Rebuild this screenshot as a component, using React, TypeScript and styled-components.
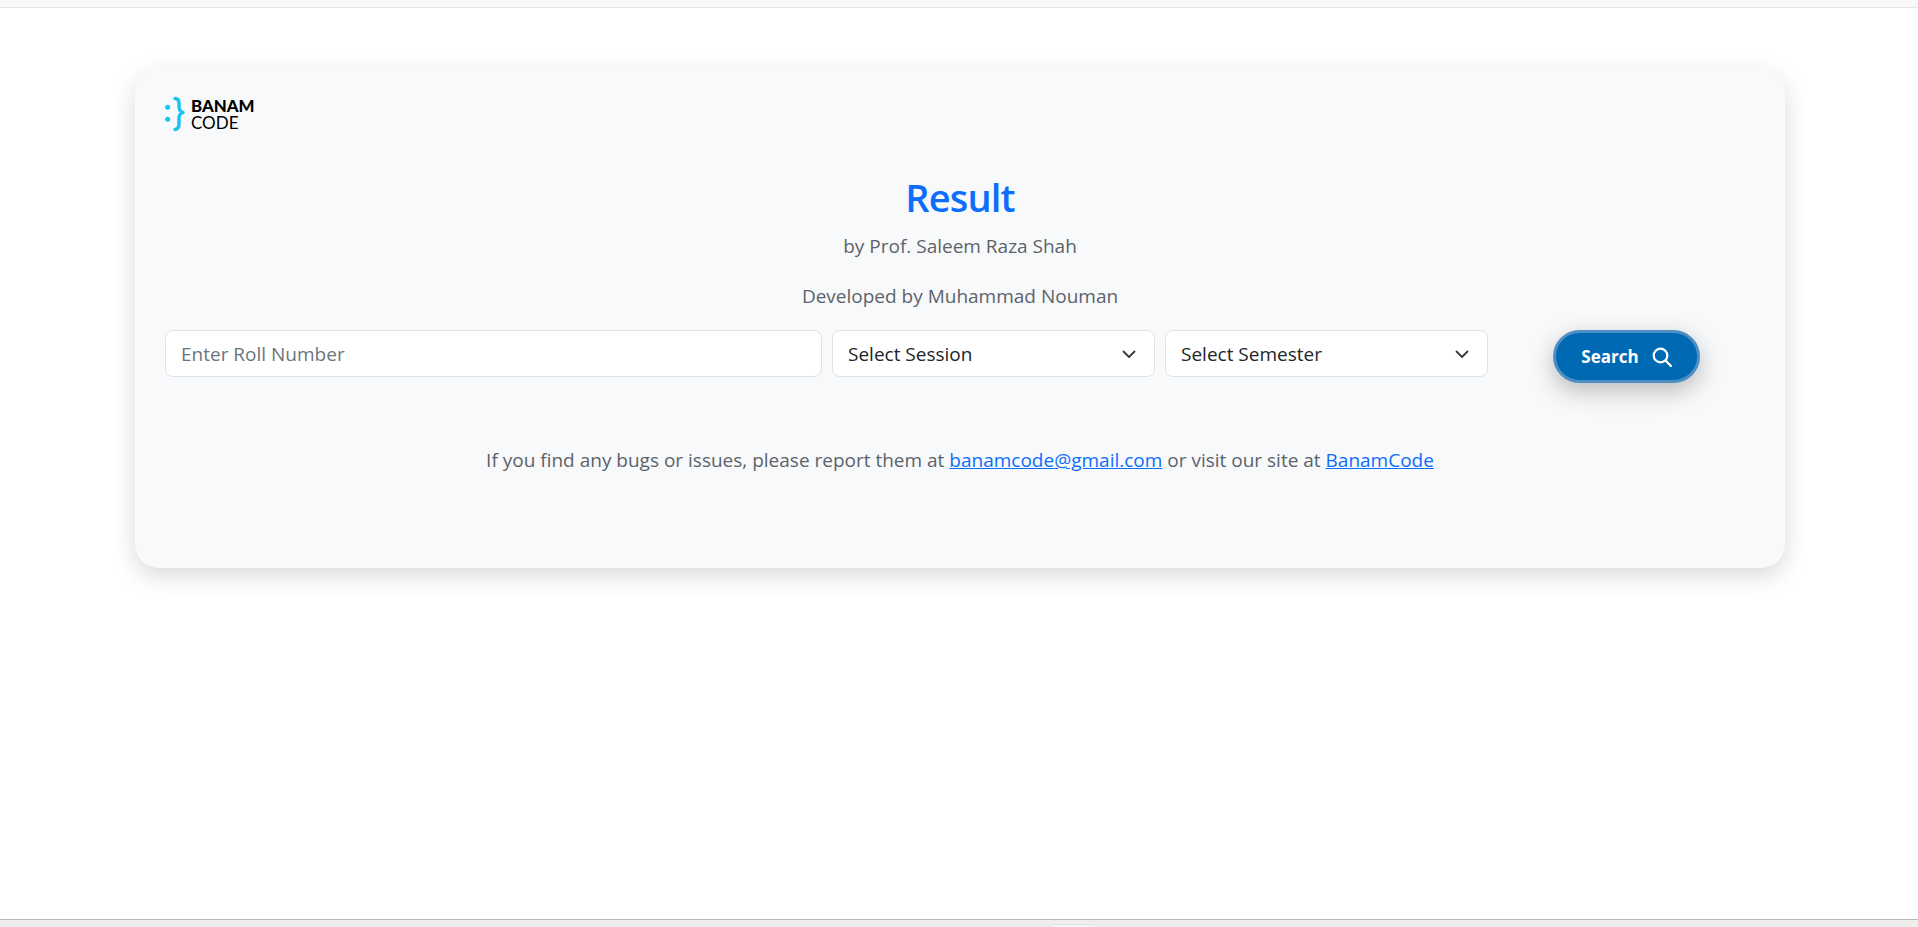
import styled, { createGlobalStyle } from 'styled-components'

const GlobalStyle = createGlobalStyle`
  * {
    box-sizing: border-box;
  }

  html, body {
    margin: 0;
    height: 100%;
    background: #fff;
    font-family: "Open Sans", "Noto Sans", sans-serif;
  }
`

const Chevron = () => (
  <svg width="16" height="16" viewBox="0 0 16 16" fill="none">
    <path d="M2.500 5.500L8 11l5.500-5.500" stroke="#343a40" strokeWidth="1.800" strokeLinecap="round" strokeLinejoin="round" />
  </svg>
)

const SearchIcon = () => (
  <svg width="20" height="20" viewBox="0 0 20 20" fill="none" stroke="#fff" strokeWidth="2.200" strokeLinecap="round">
    <circle cx="8.500" cy="8.500" r="6.800" />
    <path d="M13.600 13.600L19 19" />
  </svg>
)

const LogoMark = () => (
  <svg width="20" height="36" viewBox="0 0 20 36" fill="none">
    <circle cx="2.700" cy="11.300" r="2.500" fill="#17c3f0" />
    <circle cx="2.700" cy="23.300" r="2.500" fill="#17c3f0" />
    <path
      d="M10 2.500c3 0 4 1.500 4 4.500v4c0 3 1 4.500 4 5.500-3 1-4 2.500-4 5.500v6c0 3.500-1 5-4 5.500"
      stroke="#17c3f0"
      strokeWidth="3.400"
      strokeLinecap="round"
      strokeLinejoin="round"
    />
  </svg>
)

export default function App() {
  return (
    <>
      <GlobalStyle />
      <Page>
        <TopStrip />
        <Main>
          <Card>
            <Logo>
              <LogoMark />
              <LogoWords>
                <LogoStrong>BANAM</LogoStrong>
                <LogoLight>CODE</LogoLight>
              </LogoWords>
            </Logo>

            <Title>Result</Title>
            <Subtitle>by Prof. Saleem Raza Shah</Subtitle>
            <Subtitle>Developed by Muhammad Nouman</Subtitle>

            <Controls>
              <RollInput placeholder="Enter Roll Number" />
              <SelectBox>
                Select Session
                <Chevron />
              </SelectBox>
              <SelectBox>
                Select Semester
                <Chevron />
              </SelectBox>
              <ButtonSlot>
                <SearchButton>
                  Search
                  <SearchIcon />
                </SearchButton>
              </ButtonSlot>
            </Controls>

            <Notice>
              If you find any bugs or issues, please report them at{' '}
              <NoticeLink href="#">banamcode@gmail.com</NoticeLink> or visit our site at{' '}
              <NoticeLink href="#">BanamCode</NoticeLink>
            </Notice>
          </Card>
        </Main>
        <BottomStrip>
          <BottomTab />
        </BottomStrip>
      </Page>
    </>
  )
}

const Page = styled.div`
  display: flex;
  flex-direction: column;
  height: 927px;
  overflow: hidden;
`

const TopStrip = styled.div`
  height: 8px;
  background: #f8f8f8;
  border-bottom: 1px solid #e4e4e4;
`

const Main = styled.div`
  flex: 1;
  padding: 60px 133px 0 135px;
`

const Card = styled.div`
  height: 500px;
  padding: 28px 30px 0;
  background: #f8f9fa;
  border-radius: 24px;
  box-shadow: 0 8px 24px rgba(0, 0, 0, 0.15);
`

const Logo = styled.div`
  display: flex;
  align-items: center;
  gap: 6px;
  height: 36px;
`

const LogoWords = styled.div`
  display: flex;
  flex-direction: column;
  font-family: "Lato", sans-serif;
  line-height: 17px;
  color: #000;
`

const LogoStrong = styled.span`
  font-size: 16.800px;
  font-weight: 900;
`

const LogoLight = styled.span`
  font-size: 17px;
  font-weight: 400;
`

const Title = styled.h1`
  margin: 41px 0 11px;
  text-align: center;
  font-size: 38px;
  line-height: 48px;
  font-weight: 600;
  letter-spacing: -0.850px;
  color: #0d6efd;
`

const Subtitle = styled.p`
  margin: 0 0 21px;
  text-align: center;
  font-size: 19px;
  line-height: 29px;
  color: #5c636a;
`

const Controls = styled.div`
  display: flex;
  gap: 10px;
  margin-top: -2px;
`

const RollInput = styled.input`
  width: 657px;
  height: 47px;
  padding: 0 15px;
  font: inherit;
  font-size: 19px;
  color: #212529;
  background: #fff;
  border: 1px solid #dee2e6;
  border-radius: 8px;

  &::placeholder {
    color: #6c757d;
  }
`

const SelectBox = styled.div`
  display: flex;
  align-items: center;
  justify-content: space-between;
  width: 323px;
  height: 47px;
  padding: 0 17px 0 15px;
  font-size: 19px;
  color: #212529;
  background: #fff;
  border: 1px solid #dee2e6;
  border-radius: 8px;
`

const ButtonSlot = styled.div`
  flex: 1;
  display: flex;
  justify-content: center;
`

const SearchButton = styled.button`
  display: flex;
  align-items: center;
  gap: 13px;
  height: 53px;
  padding: 0 25px;
  font: inherit;
  font-size: 17px;
  font-weight: 700;
  color: #fff;
  background: #0069b4;
  border: 3px solid #4d8fc4;
  border-radius: 27px;
  box-shadow: 0 8px 24px rgba(0, 0, 0, 0.25);
`

const Notice = styled.p`
  margin: 63px 0 0;
  text-align: center;
  font-size: 19px;
  line-height: 29px;
  color: #5c636a;
`

const NoticeLink = styled.a`
  color: #0d6efd;
  text-decoration: underline;
`

const BottomStrip = styled.div`
  position: relative;
  height: 8px;
  background: #eeeeee;
  border-top: 1px solid #b8b8b8;
`

const BottomTab = styled.div`
  position: absolute;
  top: 4px;
  left: 1050px;
  width: 47px;
  height: 4px;
  background: #f5f5f5;
  border: 1px solid #e4e4e4;
  border-bottom: none;
  border-radius: 4px 4px 0 0;
`
